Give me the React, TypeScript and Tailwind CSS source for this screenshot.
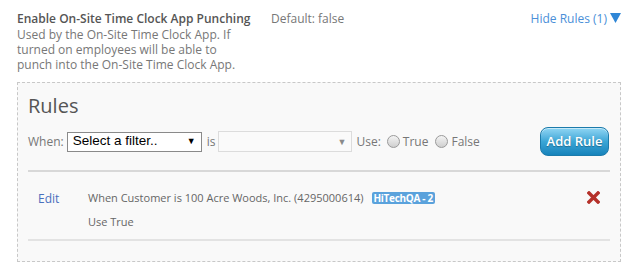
import React from 'react';

const font = { fontFamily: '"Open Sans", "Noto Sans", sans-serif' };

const Radio: React.FC<{ label: string }> = ({ label }) => (
    <label className="flex items-center gap-[3px]">
        <span className="w-[13px] h-[13px] rounded-full border border-[#9a9a9a] bg-gradient-to-b from-[#f4f4f4] to-[#cfcfcf]" />
        <span>{label}</span>
    </label>
);

const App: React.FC = () => {
    return (
        <div className="w-[634px] h-[270px] bg-white text-[12px] text-[#666] overflow-hidden" style={font}>
            {/* Setting header */}
            <div className="flex pl-[17px] pr-[13px] pt-[11px]">
                <div className="w-[254px]">
                    <div className="font-semibold text-[#555] leading-[16px]">Enable On-Site Time Clock App Punching</div>
                    <div className="text-[#777] leading-[15px] w-[220px]">
                        Used by the On-Site Time Clock App. If turned on employees will be able to punch into the On-Site Time Clock App.
                    </div>
                </div>
                <div className="text-[#777] leading-[16px]">Default: false</div>
                <div className="ml-auto flex items-start gap-[3px] text-[#4a8fd8] leading-[16px]">
                    <span>Hide Rules (1)</span>
                    <svg width="11" height="10" viewBox="0 0 11 10" className="mt-[2px]">
                        <path d="M0 0 H11 L5.5 10 Z" fill="#2f86d6" />
                    </svg>
                </div>
            </div>

            {/* Rules box */}
            <div className="mt-[10px] ml-[17px] w-[604px] h-[180px] border border-dashed border-[#c8c8c8] bg-[#f9f9f9] px-[10px] pt-[10px]">
                <h2 className="text-[20px] leading-[26px] text-[#555]">Rules</h2>
                <div className="flex items-center mt-[8px] text-[#777]">
                    <span>When:</span>
                    <div className="ml-[3px] w-[135px] h-[20px] bg-white border border-[#8a8a8a] flex items-center px-[5px] text-[13.5px] text-black" style={{ fontFamily: '"Liberation Sans", Arial, sans-serif' }}>
                        <span className="flex-1">Select a filter..</span>
                        <span className="text-[9px]">▼</span>
                    </div>
                    <span className="ml-[5px]">is</span>
                    <div className="ml-[3px] w-[134px] h-[21px] bg-[#fafafa] border border-[#dcdcdc] flex items-center justify-end px-[5px]">
                        <span className="text-[9px] text-[#8a8a8a]">▼</span>
                    </div>
                    <span className="ml-[4px]">Use:</span>
                    <div className="ml-[6px] flex items-center gap-[7px]">
                        <Radio label="True" />
                        <Radio label="False" />
                    </div>
                    <button className="ml-auto mr-[1px] w-[69px] h-[29px] rounded-[8px] border border-[#1c7bab] bg-gradient-to-b from-[#8fd6f4] via-[#3aa6d6] to-[#1683bb] text-white text-[13px] font-semibold shadow-[inset_0_1px_0_rgba(255,255,255,0.5)]" style={{ textShadow: '0 1px 1px rgba(0,0,0,0.3)' }}>
                        Add Rule
                    </button>
                </div>

                <div className="mt-[14px] border-t-2 border-[#d8d8d8]">
                    <div className="flex pt-[18px] pb-[9px] border-b-2 border-[#e3e3e3]">
                        <div className="w-[60px] pl-[10px] text-[#4a6fbd]">Edit</div>
                        <div className="flex-1 text-[#666] text-[11px]">
                            <div className="flex items-center gap-[8px] leading-[16px]">
                                <span>When Customer is 100 Acre Woods, Inc. (4295000614)</span>
                                <span className="bg-[#5aa2dc] text-white font-bold text-[10px] leading-[12px] px-[2px] rounded-[2px] tracking-[-0.3px]">HiTechQA - 2</span>
                            </div>
                            <div className="mt-[8px] leading-[16px]">Use True</div>
                        </div>
                        <div className="pr-[10px] pt-[1px]">
                            <svg width="13" height="13" viewBox="0 0 13 13">
                                <path d="M2 2 L11 11 M11 2 L2 11" stroke="#b5312a" strokeWidth="3.4" strokeLinecap="square" />
                            </svg>
                        </div>
                    </div>
                </div>
            </div>
        </div>
    );
};

export default App;
